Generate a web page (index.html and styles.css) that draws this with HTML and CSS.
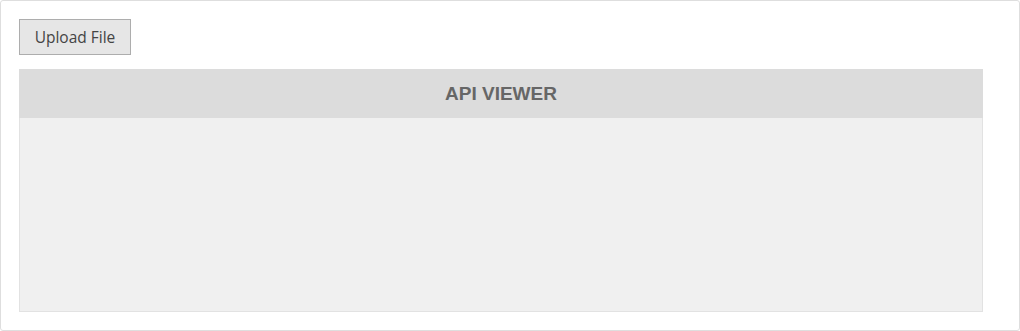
FILE: index.html
```html
<!DOCTYPE html>
<html lang="en">
<head>
  <meta charset="UTF-8">
  <title>API Viewer</title>
  <link rel="stylesheet" href="styles.css">
</head>
<body>
  <div class="page">
    <button class="upload-btn">Upload File</button>
    <div class="viewer">
      <div class="viewer-header">API VIEWER</div>
      <div class="viewer-body"></div>
    </div>
  </div>
</body>
</html>
```
FILE: styles.css
```css
html, body {
  margin: 0;
  padding: 0;
  background: #fff;
}
.page {
  box-sizing: border-box;
  width: 1020px;
  height: 331px;
  border: 1px solid #dedede;
  border-radius: 3px;
  padding: 18px;
}
.upload-btn {
  display: block;
  width: 112px;
  height: 36px;
  padding: 0;
  font-family: "Open Sans", "Noto Sans", sans-serif;
  font-size: 15.5px;
  color: #444;
  background: #e6e6e6;
  border: 1px solid #adadad;
  border-radius: 0;
}
.viewer {
  margin-top: 14px;
  width: 964px;
}
.viewer-header {
  height: 49px;
  line-height: 50px;
  text-align: center;
  background: #dcdcdc;
  font-family: "Liberation Sans", Arial, sans-serif;
  font-weight: bold;
  font-size: 19px;
  color: #666;
}
.viewer-body {
  box-sizing: border-box;
  height: 194px;
  background: #f0f0f0;
  border: 1px solid #e2e2e2;
  border-top: none;
}
```
